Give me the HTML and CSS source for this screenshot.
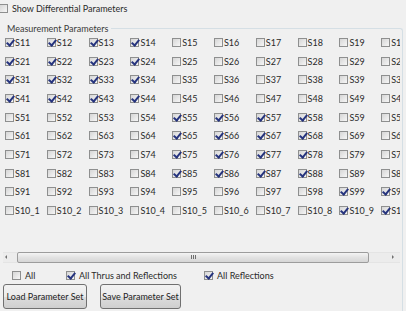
FILE: index.html
```html
<!DOCTYPE html>
<html lang="en">
<head>
    <meta charset="UTF-8">
    <title>Measurement Parameters</title>
    <link rel="stylesheet" href="styles.css">
</head>
<body>
    <div class="panel">
        <label class="check show">
            <span class="box"></span>Show Differential Parameters
        </label>

        <fieldset class="group">
            <legend>Measurement Parameters</legend>
            <div class="viewer">
                <div class="grid" id="grid"></div>
            </div>
            <div class="scrollbar">
                <span class="arrow left"></span>
                <div class="thumb"><span class="grip"></span></div>
                <span class="arrow right"></span>
            </div>
            <div class="options">
                <label class="check opt-all"><span class="box"></span>All</label>
                <label class="check opt-thrus"><span class="box on"></span>All Thrus and Reflections</label>
                <label class="check"><span class="box on"></span>All Reflections</label>
            </div>
            <div class="actions">
                <button class="load">Load Parameter Set</button>
                <button class="save">Save Parameter Set</button>
            </div>
        </fieldset>
    </div>

    <script>
        const grid = document.getElementById('grid');

        function isChecked(r, c) {
            if (r <= 4 && c <= 4) return true;
            if (r >= 5 && r <= 8 && c >= 5 && c <= 8) return true;
            return r >= 9 && c >= 9;
        }

        for (let r = 1; r <= 10; r++) {
            for (let c = 1; c <= 10; c++) {
                const name = 'S' + r + (r === 10 || c === 10 ? '_' : '') + c;
                const item = document.createElement('label');
                item.className = 'check cell';
                item.innerHTML = '<span class="box' + (isChecked(r, c) ? ' on' : '') + '"></span>' + name;
                grid.appendChild(item);
            }
        }
    </script>
</body>
</html>
```

FILE: styles.css
```css
* {
    box-sizing: border-box;
}

body {
    margin: 0;
    width: 406px;
    height: 311px;
    overflow: hidden;
    background-color: #f0f0f0;
    font-family: Lato, 'Open Sans', sans-serif;
    font-size: 9px;
    color: #2a2a2a;
}

.panel {
    padding-top: 3px;
}

.check {
    display: flex;
    align-items: center;
    gap: 2px;
    white-space: nowrap;
}

.box {
    position: relative;
    flex: none;
    width: 9px;
    height: 9px;
    border: 1px solid #8e8f8f;
    background: linear-gradient(135deg, #d6d6d6, #f6f6f6);
}

.box.on::after {
    content: '';
    position: absolute;
    left: 2px;
    top: -1px;
    width: 3px;
    height: 6px;
    border-right: 2px solid #26347e;
    border-bottom: 2px solid #26347e;
    transform: rotate(40deg);
}

.show {
    margin-left: -1px;
    height: 11px;
    gap: 4px;
}

.group {
    margin: 8px 3px 0 0;
    padding: 0;
    border: 1px solid #d5dfe5;
    border-left: 0;
    border-bottom: 0;
    border-radius: 0 3px 0 0;
    min-height: 300px;
}

.group legend {
    margin: 0;
    padding: 0 3px 0 7px;
    line-height: 13px;
    color: #3a3a3a;
}

.viewer {
    width: 397px;
    margin: -2px 0 0 3px;
    padding-left: 2px;
    overflow: hidden;
}

.grid {
    display: grid;
    grid-template-columns: repeat(10, 41.8px);
    grid-auto-rows: 18.7px;
}

.cell {
    gap: 1px;
}

.scrollbar {
    display: flex;
    align-items: center;
    width: 397px;
    height: 11px;
    margin: 32px 0 0 3px;
    border-top: 1px solid #e4e4e4;
    border-bottom: 1px solid #e4e4e4;
    background-color: #ececec;
}

.arrow {
    flex: none;
    width: 0;
    height: 0;
    border-top: 2px solid transparent;
    border-bottom: 2px solid transparent;
}

.arrow.left {
    margin: 0 10px 0 2px;
    border-right: 2px solid #707070;
}

.arrow.right {
    margin: 0 6px 0 23px;
    border-left: 2px solid #707070;
}

.thumb {
    flex: 1;
    height: 11px;
    display: flex;
    align-items: center;
    justify-content: center;
    border: 1px solid #9c9c9c;
    border-radius: 2px;
    background: linear-gradient(#f4f4f4, #e2e2e2 50%, #d6d6d6);
}

.grip {
    width: 5px;
    height: 4px;
    background: repeating-linear-gradient(90deg, #6e6e6e 0 1px, transparent 1px 2px);
}

.options {
    display: flex;
    align-items: center;
    height: 10px;
    margin: 8px 0 0 12px;
    gap: 3px;
}

.options .check {
    gap: 4px;
}

.opt-all {
    width: 51px;
}

.opt-thrus {
    width: 135px;
}

.actions {
    display: flex;
    gap: 13px;
    margin: 3px 0 0 3px;
}

button {
    height: 25px;
    padding: 0;
    border: 1px solid #707070;
    border-radius: 3px;
    background: linear-gradient(#f2f2f2, #ebebeb 50%, #dddddd 50%, #cfcfcf);
    font-family: Lato, 'Open Sans', sans-serif;
    font-size: 9px;
    color: #1e1e1e;
    white-space: nowrap;
}

.load {
    width: 84px;
}

.save {
    width: 81px;
}
```
